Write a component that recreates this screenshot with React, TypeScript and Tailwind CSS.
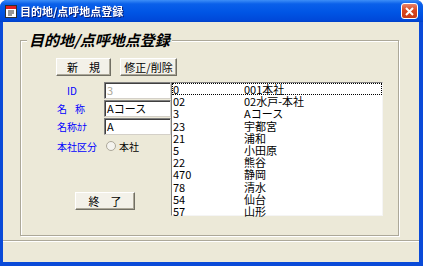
import React from 'react';

const rows = [
  { id: '0', name: '001本社' },
  { id: '02', name: '02水戸-本社' },
  { id: '3', name: 'Aコース' },
  { id: '23', name: '宇都宮' },
  { id: '21', name: '浦和' },
  { id: '5', name: '小田原' },
  { id: '22', name: '熊谷' },
  { id: '470', name: '静岡' },
  { id: '78', name: '清水' },
  { id: '54', name: '仙台' },
  { id: '57', name: '山形' },
];

const font = 'font-["Noto_Sans_CJK_JP","Liberation_Sans",sans-serif]';

const Btn: React.FC<{ w: string; children: React.ReactNode }> = ({ w, children }) => (
  <div
    className={`${w} h-[18px] flex items-center justify-center text-[11px] leading-none text-black bg-[#f3f1e9] border border-t-white border-l-white border-r-[#716f64] border-b-[#716f64] shadow-[inset_-1px_-1px_0_#aca899]`}
  >
    {children}
  </div>
);

const Field: React.FC<{ value: string; muted?: boolean }> = ({ value, muted }) => (
  <div
    className={`w-[67px] h-[17px] bg-white border border-t-[#808080] border-l-[#808080] border-r-[#d4d0c8] border-b-[#d4d0c8] shadow-[inset_1px_1px_0_#404040] px-[2px] text-[11px] leading-[15px] ${muted ? 'text-[#aca899]' : 'text-black'}`}
  >
    {value}
  </div>
);

export default function App() {
  return (
    <div className={`w-[423px] h-[266px] flex flex-col bg-[#0a4ad8] rounded-t-[7px] overflow-hidden ${font}`}>
      {/* title bar */}
      <div className="h-[22px] flex items-center px-[4px] bg-[linear-gradient(to_bottom,#3d8ef7_0%,#0a60ea_18%,#0055e5_55%,#0049da_90%,#0040c8_100%)]">
        <svg width="14" height="14" viewBox="0 0 14 14" className="shrink-0">
          <rect x="1.5" y="1.5" width="11" height="12" fill="#fff" stroke="#303030" />
          <rect x="2" y="2" width="10" height="3" fill="#e02020" />
          <path d="M4 7h6M4 9h6M4 11h4" stroke="#303030" strokeWidth="1" />
        </svg>
        <span className="ml-[2px] text-[11px] font-bold text-white leading-none drop-shadow-[1px_1px_0_#0a1f78]">目的地/点呼地点登録</span>
        <div className="ml-auto mr-[1px] w-[17px] h-[16px] rounded-[3px] border border-white bg-[linear-gradient(to_bottom,#e9836a,#d9471f_45%,#c83a16)] flex items-center justify-center">
          <svg width="9" height="9" viewBox="0 0 9 9">
            <path d="M1 1L8 8M8 1L1 8" stroke="#fff" strokeWidth="2" />
          </svg>
        </div>
      </div>

      {/* client */}
      <div className="flex-1 flex px-[4px] pb-[4px] pl-[3px]">
        <div className="flex-1 flex flex-col bg-[#ece9d8]">
          {/* group box */}
          <div className="relative mt-[18px] ml-[17px] w-[379px] h-[196px] border border-[#aca899] shadow-[inset_1px_1px_0_#fff,1px_1px_0_#fff]">
            <div className="absolute left-[6px] top-[-10px] px-[2px] bg-[#ece9d8] text-[15px] font-bold italic leading-[18px] text-black">
              目的地/点呼地点登録
            </div>

            <div className="pt-[17px] pl-[35px] flex flex-col">
              <div className="flex gap-[9px]">
                <Btn w="w-[55px]">新　規</Btn>
                <Btn w="w-[57px]">修正/削除</Btn>
              </div>

              <div className="mt-[6px] flex">
                <div className="w-[115px] flex flex-col">
                  <div className="flex h-[17px] items-center">
                    <span className="w-[48px] pl-[11px] text-[10px] text-[#0000ff]">ID</span>
                    <Field value="3" muted />
                  </div>
                  <div className="flex h-[17px] mt-[1px] items-center">
                    <span className="w-[48px] pl-[1px] text-[10px] text-[#0000ff] tracking-[8px]">名称</span>
                    <Field value="Aコース" />
                  </div>
                  <div className="flex h-[17px] mt-[1px] items-center">
                    <span className="w-[48px] pl-[1px] text-[10px] text-[#0000ff]">名称ｶﾅ</span>
                    <Field value="A" />
                  </div>
                  <div className="flex h-[16px] mt-[3px] items-center">
                    <span className="w-[50px] pl-[1px] text-[10px] text-[#0000ff]">本社区分</span>
                    <span className="w-[10px] h-[10px] rounded-full border border-[#aca899] bg-[#f4f3ee] shrink-0" />
                    <span className="ml-[3px] text-[10px] text-black">本社</span>
                  </div>
                  <div className="mt-[38px] ml-[19px]">
                    <Btn w="w-[60px]">終　了</Btn>
                  </div>
                </div>

                <div className="w-[212px] h-[134px] bg-white border border-t-[#808080] border-l-[#808080] border-r-[#f5f5f5] border-b-[#f5f5f5] text-[11px] text-black">
                  {rows.map((r, i) => (
                    <div
                      key={i}
                      className={`flex h-[12.2px] items-center leading-[12px] ${i === 0 ? 'outline-1 outline-dotted outline-black -outline-offset-1' : ''}`}
                    >
                      <span className="w-[72px] pl-[1px]">{r.id}</span>
                      <span>{r.name}</span>
                    </div>
                  ))}
                </div>
              </div>
            </div>
          </div>

          {/* status bar */}
          <div className="mt-[4px] flex-1 border-t border-[#aca899] shadow-[inset_0_1px_0_#fff]" />
        </div>
      </div>
    </div>
  );
}
